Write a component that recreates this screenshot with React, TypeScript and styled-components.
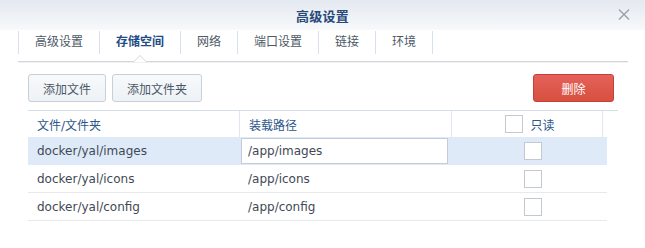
import React, { useState } from 'react';
import styled, { createGlobalStyle } from 'styled-components';

interface Mount {
  id: number;
  folder: string;
  path: string;
  readonly: boolean;
}

const GlobalStyle = createGlobalStyle`
  body {
    margin: 0;
    background: #fff;
    font-family: "DejaVu Sans", "Noto Sans CJK SC", sans-serif;
  }
`;

const cjk = `"DejaVu Sans", "Noto Sans CJK SC", sans-serif`;

const Window = styled.div`
  width: 645px;
  height: 248px;
  background: #fff;
  overflow: hidden;
`;

const TitleBar = styled.div`
  position: relative;
  height: 30px;
  display: flex;
  align-items: center;
  justify-content: center;
  background: linear-gradient(to bottom, #e4e9f0 0%, #f7f9fb 100%);
`;

const Title = styled.div`
  font-family: ${cjk};
  font-size: 13px;
  font-weight: bold;
  color: #27497a;
  letter-spacing: 0.2px;
`;

const CloseButton = styled.button`
  position: absolute;
  right: 15px;
  top: 9px;
  width: 12px;
  height: 11px;
  padding: 0;
  border: none;
  background: none;
  cursor: pointer;
  display: flex;
`;

const TabStrip = styled.div`
  display: flex;
  margin: 0 17px 0 18px;
  padding: 1px 0 7px;
  border-bottom: 1px solid #d3d6db;
  box-shadow: 0 1px 0 #eef0f2;
`;

const Tab = styled.div<{ $active?: boolean; $first?: boolean }>`
  position: relative;
  height: 23px;
  line-height: 23px;
  padding: 0 16px;
  border-left: ${(p) => (p.$first ? '1px solid #d8e0ea' : 'none')};
  border-right: 1px solid #d8e0ea;
  font-family: ${cjk};
  font-size: 12px;
  color: ${(p) => (p.$active ? '#1f4d84' : '#4d5966')};
  font-weight: ${(p) => (p.$active ? 600 : 'normal')};
  cursor: pointer;

  ${(p) =>
    p.$active &&
    `
    &::before, &::after {
      content: '';
      position: absolute;
      left: 50%;
      width: 0;
      height: 0;
      border-style: solid;
    }
    &::before {
      bottom: -8px;
      margin-left: -7px;
      border-width: 0 7px 7px 7px;
      border-color: transparent transparent #d3d6db transparent;
    }
    &::after {
      bottom: -8px;
      margin-left: -6px;
      border-width: 0 6px 6px 6px;
      border-color: transparent transparent #fff transparent;
    }
  `}
`;

const Content = styled.div`
  padding: 12px 27px 0 28px;
`;

const Toolbar = styled.div`
  display: flex;
  align-items: center;
  gap: 6px;
  margin-bottom: 8px;
`;

const Spacer = styled.div`
  flex: 1;
`;

const Button = styled.button<{ $danger?: boolean }>`
  height: 28px;
  padding: 0 14px;
  border-radius: 3px;
  font-family: ${cjk};
  font-size: 12px;
  cursor: pointer;
  border: 1px solid ${(p) => (p.$danger ? '#c93e36' : '#c6cfda')};
  background: ${(p) =>
    p.$danger
      ? 'linear-gradient(to bottom, #e5625a, #d7503f)'
      : 'linear-gradient(to bottom, #f7f9fb, #eef2f6)'};
  color: ${(p) => (p.$danger ? '#fff' : '#4a5866')};
  ${(p) => p.$danger && 'width: 81px; margin-right: 4px;'}
`;

const HeaderRow = styled.div`
  display: grid;
  grid-template-columns: 211px 212px 151px 16px;
  height: 26px;
  border-top: 1px solid #d6dee9;
`;

const HeaderCell = styled.div<{ $center?: boolean }>`
  display: flex;
  align-items: center;
  justify-content: ${(p) => (p.$center ? 'center' : 'flex-start')};
  gap: 7px;
  padding: 0 9px;
  ${(p) => p.$center && 'padding-left: 15px;'}
  border-left: 1px solid #dfe6ef;
  font-family: ${cjk};
  font-size: 12px;
  color: #2d5689;

  &:first-child {
    border-left: none;
  }
`;

const Body = styled.div`
  width: 579px;
`;

const Row = styled.div<{ $selected?: boolean }>`
  display: grid;
  grid-template-columns: 211px 212px 1fr;
  height: 27px;
  border-bottom: 1px solid ${(p) => (p.$selected ? '#dfeaf9' : '#e7e9ec')};
  background: ${(p) => (p.$selected ? '#dfeaf9' : '#fff')};
`;

const Cell = styled.div<{ $center?: boolean }>`
  display: flex;
  align-items: center;
  justify-content: ${(p) => (p.$center ? 'center' : 'flex-start')};
  padding: 0 9px;
  font-size: 12px;
  color: #3f4954;
  ${(p) => p.$center && 'padding-left: 16px;'}
`;

const EditCell = styled.div`
  display: flex;
  align-items: center;
  padding: 1px 3px 0 2px;
`;

const PathInput = styled.input`
  width: 100%;
  height: 26px;
  box-sizing: border-box;
  border: 1px solid #c4ccd7;
  background: #fff;
  padding: 0 6px;
  font-family: "DejaVu Sans", sans-serif;
  font-size: 12px;
  color: #3f4954;
  outline: none;
`;

const CheckBox = styled.span<{ $checked?: boolean }>`
  display: inline-block;
  width: 18px;
  height: 18px;
  box-sizing: border-box;
  border: 1px solid #c3c9d1;
  background: ${(p) => (p.$checked ? '#3b82d6' : '#fff')};
  cursor: pointer;
`;

const initialMounts: Mount[] = [
  { id: 1, folder: 'docker/yal/images', path: '/app/images', readonly: false },
  { id: 2, folder: 'docker/yal/icons', path: '/app/icons', readonly: false },
  { id: 3, folder: 'docker/yal/config', path: '/app/config', readonly: false },
];

const tabs = ['高级设置', '存储空间', '网络', '端口设置', '链接', '环境'];

const App: React.FC = () => {
  const [activeTab, setActiveTab] = useState<number>(1);
  const [mounts, setMounts] = useState<Mount[]>(initialMounts);
  const [selected, setSelected] = useState<number>(1);

  const updatePath = (id: number, path: string) => {
    setMounts(mounts.map((m) => (m.id === id ? { ...m, path } : m)));
  };

  const toggleReadonly = (id: number) => {
    setMounts(mounts.map((m) => (m.id === id ? { ...m, readonly: !m.readonly } : m)));
  };

  return (
    <Window>
      <GlobalStyle />
      <TitleBar>
        <Title>高级设置</Title>
        <CloseButton aria-label="close">
          <svg width="12" height="11" viewBox="0 0 12 11">
            <path d="M1 0.5 L11 10.5 M11 0.5 L1 10.5" stroke="#9aa1aa" strokeWidth="1.4" fill="none" />
          </svg>
        </CloseButton>
      </TitleBar>

      <TabStrip>
        {tabs.map((t, i) => (
          <Tab key={t} $first={i === 0} $active={i === activeTab} onClick={() => setActiveTab(i)}>
            {t}
          </Tab>
        ))}
      </TabStrip>

      <Content>
        <Toolbar>
          <Button>添加文件</Button>
          <Button>添加文件夹</Button>
          <Spacer />
          <Button $danger>删除</Button>
        </Toolbar>

        <HeaderRow>
          <HeaderCell>文件/文件夹</HeaderCell>
          <HeaderCell>装载路径</HeaderCell>
          <HeaderCell $center>
            <CheckBox />
            只读
          </HeaderCell>
          <HeaderCell />
        </HeaderRow>

        <Body>
          {mounts.map((m) => (
            <Row key={m.id} $selected={m.id === selected} onClick={() => setSelected(m.id)}>
              <Cell>{m.folder}</Cell>
              {m.id === selected ? (
                <EditCell>
                  <PathInput value={m.path} onChange={(e) => updatePath(m.id, e.target.value)} />
                </EditCell>
              ) : (
                <Cell>{m.path}</Cell>
              )}
              <Cell $center>
                <CheckBox $checked={m.readonly} onClick={() => toggleReadonly(m.id)} />
              </Cell>
            </Row>
          ))}
        </Body>
      </Content>
    </Window>
  );
};

export default App;
